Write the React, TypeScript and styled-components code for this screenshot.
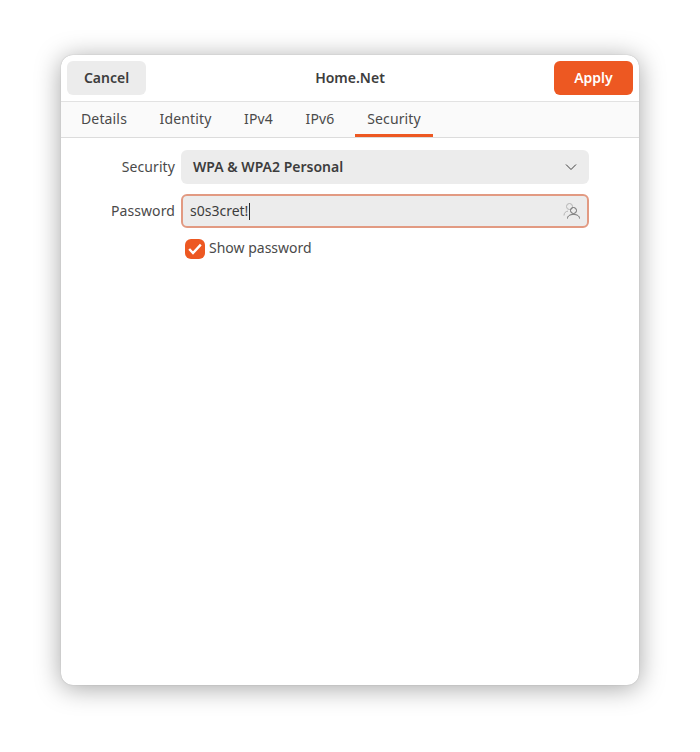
import React from "react";
import styled, { createGlobalStyle } from "styled-components";

const GlobalStyle = createGlobalStyle`
  html, body {
    margin: 0;
    padding: 0;
    background: #ffffff;
    font-family: "Noto Sans", "Open Sans", sans-serif;
    color: #3d3d3d;
  }
`;

const TABS = [
  { label: "Details", width: 70 },
  { label: "Identity", width: 75 },
  { label: "IPv4", width: 53 },
  { label: "IPv6", width: 52 },
  { label: "Security", width: 78, active: true },
];

function PersonIcon() {
  return (
    <svg width="18" height="18" viewBox="0 0 18 18" fill="none" strokeWidth="1">
      <g stroke="#b4b4b4">
        <circle cx="6.5" cy="4.5" r="3" />
        <path d="M1 13.5c0-2.8 1.8-4.1 4-4.4" />
      </g>
      <g stroke="#6a6a6a">
        <circle cx="10.5" cy="8.5" r="3" />
        <path d="M4.5 16.5c0-2.8 2.6-4 6-4s6 1.2 6 4" />
      </g>
    </svg>
  );
}

export default function App() {
  return (
    <>
      <GlobalStyle />
      <Page>
        <Dialog>
          <HeaderBar>
            <CancelButton>Cancel</CancelButton>
            <Title>Home.Net</Title>
            <ApplyButton>Apply</ApplyButton>
          </HeaderBar>
          <TabBar>
            {TABS.map((tab) => (
              <Tab key={tab.label} $width={tab.width} $active={tab.active}>
                {tab.label}
              </Tab>
            ))}
          </TabBar>
          <Form>
            <Label>Security</Label>
            <Select>
              <span>WPA &amp; WPA2 Personal</span>
              <svg width="12" height="8" viewBox="0 0 12 8" fill="none">
                <path d="M1 1.5 6 6.5l5-5" stroke="#3d3d3d" strokeWidth="1" />
              </svg>
            </Select>
            <Label>Password</Label>
            <PasswordField>
              <PasswordText>
                s0s3cret!
                <Caret />
              </PasswordText>
              <PersonIcon />
            </PasswordField>
            <CheckRow>
              <CheckBox>
                <svg width="16" height="14" viewBox="0 0 16 14" fill="none">
                  <path d="M2.2 7 6 11 13.8 2.6" stroke="#ffffff" strokeWidth="2.4" />
                </svg>
              </CheckBox>
              <CheckLabel>Show password</CheckLabel>
            </CheckRow>
          </Form>
        </Dialog>
      </Page>
    </>
  );
}

const Page = styled.div`
  width: 700px;
  height: 752px;
  padding: 55px 61px 67px;
  box-sizing: border-box;
  background: #ffffff;
  overflow: hidden;
`;

const Dialog = styled.div`
  width: 578px;
  height: 630px;
  background: #ffffff;
  border-radius: 12px;
  overflow: hidden;
  box-shadow: 0 0 1px rgba(0, 0, 0, 0.3), 0 3px 26px rgba(0, 0, 0, 0.36);
  display: flex;
  flex-direction: column;
`;

const HeaderBar = styled.div`
  height: 47px;
  flex: none;
  box-sizing: border-box;
  padding: 6px;
  display: flex;
  align-items: flex-start;
  justify-content: space-between;
  border-bottom: 1px solid #e2e2e2;
`;

const HeaderButton = styled.div`
  width: 79px;
  height: 34px;
  box-sizing: border-box;
  padding-bottom: 2px;
  border-radius: 6px;
  display: flex;
  align-items: center;
  justify-content: center;
  font-size: 14px;
  font-weight: 600;
`;

const CancelButton = styled(HeaderButton)`
  background: #ececec;
  color: #3d3d3d;
`;

const ApplyButton = styled(HeaderButton)`
  background: #ed5822;
  color: #ffffff;
`;

const Title = styled.div`
  font-size: 14px;
  font-weight: 600;
  line-height: 34px;
  color: #3d3d3d;
`;

const TabBar = styled.div`
  height: 36px;
  flex: none;
  box-sizing: border-box;
  padding-left: 8px;
  display: flex;
  gap: 9px;
  background: #fafafa;
  border-bottom: 1px solid #dcdcdc;
`;

const Tab = styled.div<{ $width: number; $active?: boolean }>`
  width: ${(p) => p.$width}px;
  box-sizing: border-box;
  height: 35px;
  padding-bottom: 3px;
  display: flex;
  align-items: center;
  justify-content: center;
  font-size: 14px;
  letter-spacing: 0.15px;
  color: #4a4a4a;
  border-bottom: 3px solid ${(p) => (p.$active ? "#ed5822" : "transparent")};
  border-top: 3px solid transparent;
`;

const Form = styled.div`
  padding: 12px 50px 0 0;
  display: grid;
  grid-template-columns: 114px 408px;
  column-gap: 6px;
  row-gap: 10px;
  align-items: center;
`;

const Label = styled.div`
  text-align: right;
  font-size: 14px;
  letter-spacing: 0.1px;
  color: #4a4a4a;
  padding-bottom: 2px;
`;

const Select = styled.div`
  height: 34px;
  box-sizing: border-box;
  padding: 0 12px 2px 12px;
  display: flex;
  align-items: center;
  justify-content: space-between;
  background: #ececec;
  border-radius: 6px;
  font-size: 14px;
  font-weight: 600;
  color: #3d3d3d;

  svg {
    margin-top: 2px;
  }
`;

const PasswordField = styled.div`
  height: 34px;
  box-sizing: border-box;
  padding: 0 6px 0 7px;
  display: flex;
  align-items: center;
  justify-content: space-between;
  background: #ececec;
  border: 2px solid #e29a82;
  border-radius: 6px;
`;

const PasswordText = styled.div`
  display: flex;
  align-items: center;
  font-size: 14px;
  color: #3d3d3d;
  padding-bottom: 2px;
`;

const Caret = styled.span`
  width: 1px;
  height: 17px;
  margin: 2px 0 0 1px;
  background: #2a2a2a;
`;

const CheckRow = styled.div`
  grid-column: 2;
  padding-left: 4px;
  display: flex;
  align-items: center;
  gap: 4px;
`;

const CheckBox = styled.div`
  width: 20px;
  height: 20px;
  border-radius: 6px;
  background: #ed5822;
  display: flex;
  align-items: center;
  justify-content: center;
`;

const CheckLabel = styled.span`
  font-size: 14px;
  color: #4a4a4a;
  padding-bottom: 2px;
`;
